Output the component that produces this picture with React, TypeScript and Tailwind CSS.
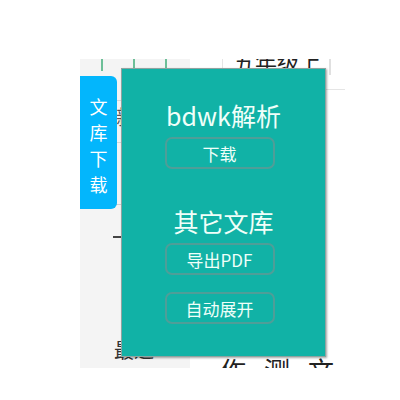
import React from 'react'

const font = { fontFamily: '"Noto Sans CJK SC", "Noto Sans", sans-serif' }

const PanelButton = ({ label }: { label: string }) => (
  <button className="mr-[8px] flex h-[32px] w-[110px] items-center justify-center rounded-[7px] border-2 border-[#4f9e98] text-[17px] leading-none text-[#effff9]">
    {label}
  </button>
)

export default function App() {
  return (
    <div className="relative h-[400px] w-[400px] overflow-hidden bg-white" style={font}>
      {/* page behind the overlay */}
      <div className="ml-[80px] mt-[59px] flex h-[309px] w-[265px] overflow-hidden">
        {/* left grey column */}
        <div className="relative flex w-[110px] flex-col overflow-hidden bg-[#f4f4f4]">
          <div className="flex h-[12px] shrink-0 gap-[30px] pl-[21px]">
            <div className="w-[2px] bg-[#6dbf98]" />
            <div className="w-[2px] bg-[#6dbf98]" />
            <div className="w-[2px] bg-[#6dbf98]" />
          </div>
          <div className="ml-[20px] mt-[29px] h-px w-[40px] shrink-0 bg-[#d8d8d8]" />
          <div className="ml-[36px] mt-[4px] text-[20px] leading-[24px] text-[#555]">新</div>
          <div className="ml-[20px] mt-[13px] h-px w-[40px] shrink-0 bg-[#d8d8d8]" />
          <div className="ml-[21px] mt-[30px] h-[32px] w-[40px] shrink-0 rounded-bl-[10px] border-b border-l border-[#cfcfcf]" />
          <div className="ml-[33px] mt-[31px] h-[2px] w-[9px] shrink-0 bg-[#444]" />
          <div className="ml-[40px] mt-[50px] text-[16px] leading-[20px] text-[#bbb]">(</div>
          <div className="ml-[34px] mt-[30px] shrink-0 text-[20px] leading-[24px] text-[#333]">最近</div>
        </div>
        {/* white content */}
        <div className="relative flex flex-1 flex-col bg-white">
          <div className="flex h-[30px]">
            <div className="ml-[32px] w-px bg-[#e5e5e5]" />
            <div className="-mt-[10px] ml-[10px] text-[22px] leading-[22px] text-[#222]">五年级上</div>
            <div className="ml-auto mr-[14px] h-[16px] w-[2px] bg-[#e0e0e0]" />
          </div>
          <div className="ml-auto h-px w-[20px] bg-[#e5e5e5]" />
          <div className="mt-auto flex h-[13px] gap-[18px] overflow-hidden pl-[30px]">
            <span className="text-[26px] leading-[30px] text-[#222]">作</span>
            <span className="text-[26px] leading-[30px] text-[#222]">测</span>
            <span className="text-[26px] leading-[30px] text-[#222]">文</span>
          </div>
        </div>
      </div>

      {/* side tab */}
      <div className="absolute left-[80px] top-[76px] flex h-[133px] w-[37px] flex-col items-center justify-center rounded-r-[6px] bg-[#03b6fc] pt-[4px] text-[18px] leading-[26px] text-white">
        <span>文</span>
        <span>库</span>
        <span>下</span>
        <span>载</span>
      </div>

      {/* floating panel */}
      <div className="absolute left-[121px] top-[68px] flex h-[289px] w-[205px] flex-col items-center border border-[#8fa3a0] bg-[#11b2a6] pt-[30px] shadow-[1px_1px_2px_rgba(0,0,0,0.35)]">
        <div className="text-[25px] leading-[32px] text-[#f0fff9]">bdwk解析</div>
        <div className="mt-[6px]">
          <PanelButton label="下载" />
        </div>
        <div className="mt-[36px] text-[25px] leading-[32px] text-[#f0fff9]">其它文库</div>
        <div className="mt-[6px]">
          <PanelButton label="导出PDF" />
        </div>
        <div className="mt-[17px]">
          <PanelButton label="自动展开" />
        </div>
      </div>
    </div>
  )
}
